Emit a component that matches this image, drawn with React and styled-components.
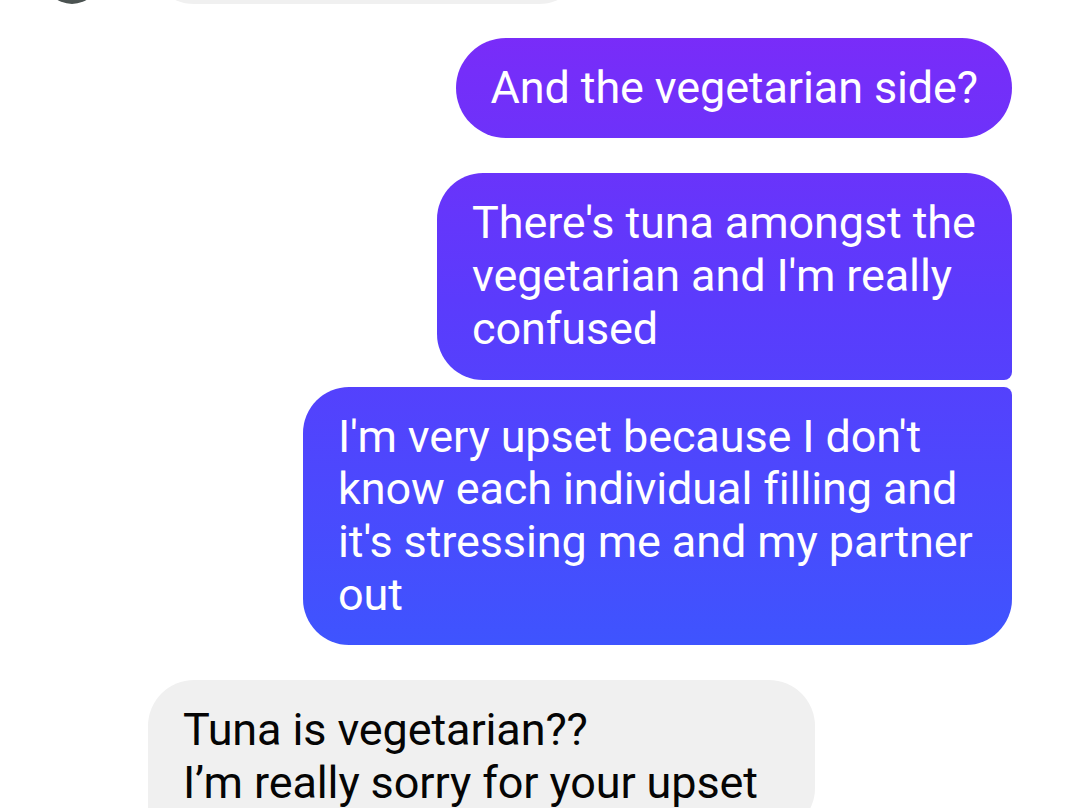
import React from 'react';
import styled, { createGlobalStyle, css } from 'styled-components';

const GlobalStyle = createGlobalStyle`
  html, body {
    margin: 0;
    padding: 0;
    background: #ffffff;
  }
  body {
    font-family: Roboto, "Noto Sans", "Liberation Sans", sans-serif;
  }
`;

const Screen = styled.div`
  width: 1080px;
  height: 808px;
  overflow: hidden;
  background: #ffffff;
`;

// the thread is scrolled: the first bubble sits mostly above the screen
const Thread = styled.div`
  display: flex;
  flex-direction: column;
  margin-top: -97px;
  padding: 0 68px 0 44px;
`;

const Group = styled.div`
  display: flex;
  flex-direction: column;
  align-items: ${props => (props.mine ? 'flex-end' : 'flex-start')};
  gap: 7px;
  margin-top: ${props => props.spaceAbove || 0}px;
`;

const Row = styled.div`
  display: flex;
  align-items: flex-end;
  gap: 48px;
`;

const Avatar = styled.div`
  width: 56px;
  height: 56px;
  border-radius: 50%;
  background: radial-gradient(circle at 50% 40%, #6b7472, #3f4645);
  flex-shrink: 0;
`;

const AvatarSpace = styled.div`
  width: 56px;
  flex-shrink: 0;
`;

// radius by position in the group
const radius = {
  single: css`border-radius: 50px;`,
  first: css`border-radius: 46px 46px 8px 46px;`,
  last: css`border-radius: 46px 8px 46px 46px;`,
  theirFirst: css`border-radius: 46px 46px 46px 8px;`,
  theirLast: css`border-radius: 8px 46px 46px 46px;`,
};

const Bubble = styled.div`
  box-sizing: border-box;
  max-width: ${props => props.maxW || 720}px;
  ${props => props.w && css`width: ${props.w}px;`}
  padding: 24px 34px 24px 35px;
  font-size: 45px;
  line-height: 52.7px;
  letter-spacing: -0.12px;
  overflow: hidden;
  white-space: ${props => (props.nowrap ? 'nowrap' : 'normal')};
  ${props => radius[props.shape || 'single']}
  ${props =>
    props.mine
      ? css`
          color: #ffffff;
          background-image: linear-gradient(180deg, #7d2af8 0px, #5b3bfc 300px, #3160ff 808px);
          background-attachment: fixed;
        `
      : css`
          color: #050505;
          background: #f0f0f0;
        `}
`;

export default function App() {
  return (
    <Screen>
      <GlobalStyle />
      <Thread>
        <Row>
          <Avatar />
          <Bubble shape="theirLast" w={437} nowrap>Which are meat?</Bubble>
        </Row>

        <Group mine spaceAbove={34}>
          <Bubble mine shape="single">And the vegetarian side?</Bubble>
        </Group>

        <Group mine spaceAbove={35}>
          <Bubble mine shape="first" maxW={575}>
            There's tuna amongst the vegetarian and I'm really confused
          </Bubble>
          <Bubble mine shape="last" maxW={709}>
            I'm very upset because I don't know each individual filling and it's stressing me and my partner out
          </Bubble>
        </Group>

        <Group spaceAbove={35}>
          <Row>
            <AvatarSpace />
            <Bubble shape="theirFirst" w={667}>
              Tuna is vegetarian??
              <br />
              I’m really sorry for your upset
            </Bubble>
          </Row>
        </Group>
      </Thread>
    </Screen>
  );
}
